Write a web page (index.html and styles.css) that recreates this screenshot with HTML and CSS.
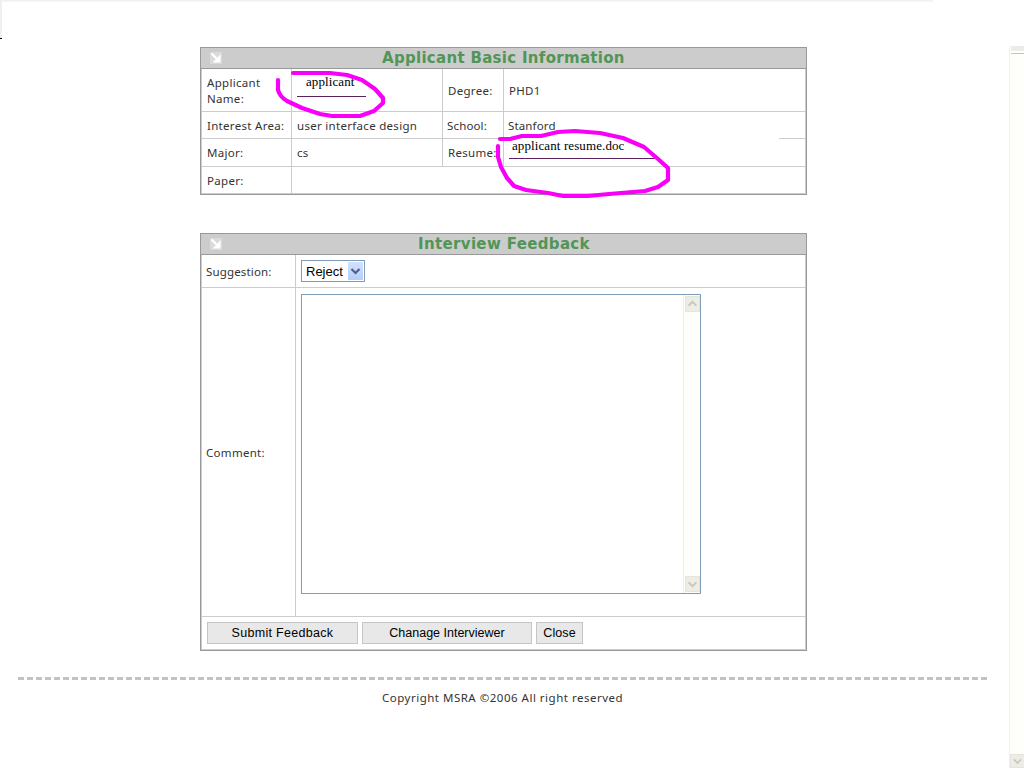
FILE: index.html
```html
<!DOCTYPE html>
<html lang="en">
<head>
<meta charset="utf-8">
<title>Interview Feedback</title>
<link rel="stylesheet" href="styles.css">
</head>
<body>
<main class="page">
  <section class="panel basic">
    <header class="panel-head">
      <svg class="arrow" viewBox="0 0 12 12"><path d="M0 0h12v12H0z" fill="#dadada"/><path d="M1.5 1.5l7 7" fill="none" stroke="#fff" stroke-width="2.4"/><path d="M10.5 2v8.5H2.5l3-3h2v-2z" fill="#fff"/></svg>
      <h1 class="title t-basic">Applicant Basic Information</h1>
    </header>
    <div class="info">
      <div class="cell">Applicant<br>Name:</div><div class="cell name"><span class="link">applicant</span></div><div class="cell">Degree:</div><div class="cell last">PHD1</div>
      <div class="cell">Interest Area:</div><div class="cell">user interface design</div><div class="cell tight">School:</div><div class="cell last school tight">Stanford</div>
      <div class="cell up">Major:</div><div class="cell up">cs</div><div class="cell up">Resume:</div><div class="cell last resume"><span class="link wide">applicant resume.doc</span></div>
      <div class="cell bottom up">Paper:</div><div class="cell bottom last span"></div>
    </div>
  </section>
  <section class="panel feedback">
    <header class="panel-head">
      <svg class="arrow" viewBox="0 0 12 12"><path d="M0 0h12v12H0z" fill="#dadada"/><path d="M1.5 1.5l7 7" fill="none" stroke="#fff" stroke-width="2.4"/><path d="M10.5 2v8.5H2.5l3-3h2v-2z" fill="#fff"/></svg>
      <h2 class="title t-feed">Interview Feedback</h2>
    </header>
    <div class="form">
      <div class="cell tight">Suggestion:</div>
      <div class="cell last"><div class="select"><span>Reject</span><i class="drop"><svg viewBox="0 0 15 18"><path d="M3.5 7l4 4 4-4" fill="none" stroke="#4d6185" stroke-width="2.2"/></svg></i></div></div>
      <div class="cell">Comment:</div>
      <div class="cell last area"><div class="textarea"><div class="scroll">
        <i class="sb"><svg viewBox="0 0 15 15"><path d="M3 9.5l4.5-4.5 4.5 4.5" fill="none" stroke="#c9c7ba" stroke-width="2"/></svg></i>
        <i class="sb"><svg viewBox="0 0 15 15"><path d="M3 5.5l4.5 4.5 4.5-4.5" fill="none" stroke="#c9c7ba" stroke-width="2"/></svg></i>
      </div></div></div>
    </div>
    <div class="actions"><button class="btn submit">Submit Feedback</button><button class="btn change">Chanage Interviewer</button><button class="btn close">Close</button></div>
  </section>
  <div class="dashes"></div>
  <footer class="copy">Copyright MSRA ©2006 All right reserved</footer>
</main>
<div class="top-edge"></div>
<div class="left-edge"></div>
<div class="page-scroll"><i class="cap"></i><i class="sb"><svg viewBox="0 0 15 15"><path d="M3 5.5l4.5 4.5 4.5-4.5" fill="none" stroke="#c9c7ba" stroke-width="2"/></svg></i></div>
<svg class="ink" viewBox="0 0 1024 768">
  <path d="M278 80V90Q280 97 287 101L302 108 320 114 332 116H360L374 111 383 103V98L375 89 362 80 347 75 330 73H293"/>
  <path d="M500 139H510L522 136 541 136 558 132 575 131 600 133 623 138 644 147 658 159 668 168V180L658 187 645 191 609 194 588 196H563L548 193 526 190 514 186 507 178 501 167 498 157V146"/>
</svg>
</body>
</html>
```
FILE: styles.css
```css
* { box-sizing: border-box; }
body { margin: 0; width: 1024px; height: 768px; overflow: hidden; background: #fff; color: #333; font: 11.5px/16px "Noto Sans", sans-serif; letter-spacing: .3px; }
.page { display: flex; flex-direction: column; padding-top: 47px; }
.panel { width: 607px; margin-left: 200px; border: 1px solid #999; box-shadow: inset 0 0 0 1px #ccc; }
.basic { height: 148px; }
.feedback { display: flex; flex-direction: column; height: 418px; margin-top: 38px; }
.panel-head { display: grid; grid-template-columns: 12px 1fr; height: 21px; padding-left: 9px; align-items: center; background: #ccc; border-bottom: 1px solid #999; }
.arrow { width: 12px; height: 12px; }
.title { margin: 0; color: #519557; font: bold 15px/20px "DejaVu Sans", sans-serif; white-space: nowrap; }
.t-basic { padding-left: 160px; letter-spacing: .3px; }
.t-feed { padding-left: 196px; letter-spacing: .35px; }
.info { display: grid; grid-template-columns: 91px 151px 61px 302px; grid-template-rows: 43px 27px 28px 27px; }
.cell { display: flex; align-items: center; padding: 2px 0 0 5px; border-right: 1px solid #ccc; border-bottom: 1px solid #ccc; white-space: nowrap; }
.info .cell:nth-child(4n + 1) { padding-left: 6px; }
.cell.up { padding-top: 0; }
.info .tight { padding-left: 4px; }
.tight { letter-spacing: .15px; }
.cell.bottom { border-bottom: 0; }
.cell.last { border-right: 0; }
.span { grid-column: span 3; }
.school { border-image: linear-gradient(90deg, transparent 274px, #ccc 274px) 1; }
.name, .resume { align-items: flex-start; }
.link { display: block; height: 24px; width: 69px; padding-left: 9px; margin-top: 2px; border-bottom: 1px solid #5b215e; color: #000; font: 13px/17px "Liberation Serif", serif; letter-spacing: .1px; }
.resume .link { height: 22px; width: 146px; margin-top: -4px; padding-left: 3px; }
.form { display: grid; grid-template-columns: 95px 510px; grid-template-rows: 33px 329px; }
.area { align-items: flex-start; padding-top: 6px; }
.select { display: flex; justify-content: space-between; width: 64px; height: 22px; margin-top: -2px; padding: 1px 1px 1px 4px; border: 1px solid #7f9db9; color: #000; font: 13px/20px "Liberation Sans", sans-serif; letter-spacing: 0; }
.drop { width: 15px; height: 18px; background: linear-gradient(#d3e1fe, #b6cdfb); }
.drop svg, .sb svg { display: block; width: 100%; height: 100%; }
.textarea { display: flex; justify-content: flex-end; width: 400px; height: 300px; border: 1px solid #7f9db9; }
.scroll { display: flex; flex-direction: column; justify-content: space-between; width: 17px; padding: 1px; border-left: 1px solid #eeeee5; background: #fefefb; }
.sb { display: block; width: 15px; height: 16px; background: #edede5; border: 1px solid #e6e5dd; }
.actions { display: flex; gap: 4px; padding: 5px 0 0 6px; }
.btn { height: 22px; padding: 0; border: 1px solid #c5c5c5; border-radius: 0; background: #e8e8e8; color: #000; font: 12.5px/18px "Liberation Sans", sans-serif; }
.submit { width: 151px; letter-spacing: .3px; }
.change { width: 170px; }
.close { width: 47px; letter-spacing: .1px; }
.dashes { height: 3px; width: 972px; margin: 26px 0 0 18px; background: repeating-linear-gradient(90deg, #c2c2c2 0 6px, transparent 6px 9px); }
.copy { padding: 10px 0 0 382px; letter-spacing: .5px; }
.top-edge { position: absolute; left: 0; top: 0; width: 933px; height: 2px; background: linear-gradient(#efefed, #f9f9f6); }
.left-edge { position: absolute; left: 0; top: 0; width: 2px; height: 39px; background: #f0f0f0; border-bottom: 1px solid #000; }
.page-scroll { position: absolute; right: 0; top: 46px; width: 15px; height: 722px; display: flex; flex-direction: column; justify-content: space-between; border-left: 1px solid #f0f0ec; background: #fefefb; }
.page-scroll .sb { height: 14px; }
.cap { height: 8px; margin-left: 1px; border-bottom: 1px solid #c5c5bb; background: #ecece6; box-shadow: inset 0 -2px #fff; }
.ink { position: absolute; inset: 0; width: 1024px; height: 768px; fill: none; stroke: #f800f8; stroke-width: 4.2; stroke-linecap: round; stroke-linejoin: round; pointer-events: none; }
```
